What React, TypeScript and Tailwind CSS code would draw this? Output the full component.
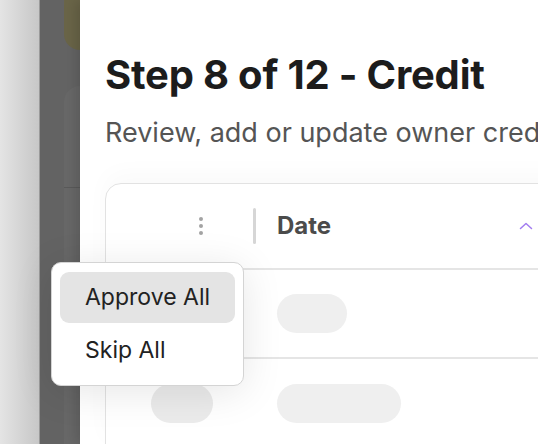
export default function App() {
  return (
    <div
      className="relative flex h-[444px] w-[538px] overflow-hidden bg-white"
      style={{ fontFamily: "Inter, 'Noto Sans', sans-serif" }}
    >
      {/* page behind the drawer */}
      <div className="h-full w-[39px] bg-gradient-to-r from-[#e4e4e4] to-[#c7c7c7]" />
      <div className="h-full w-px bg-[#9a9a9a]" />
      <div className="h-full w-[24px] bg-[#636363]" />
      <div className="flex h-full w-[16px] flex-col bg-[#646464]">
        <div className="h-[50px] rounded-bl-2xl bg-[#6a6548]" />
        <div className="mt-[36px] flex-1 rounded-tl-[28px] bg-[#686868]">
          <div className="mt-[101px] h-px bg-[#5a5a5a]" />
        </div>
      </div>

      {/* drawer */}
      <div className="flex h-full min-w-0 flex-1 flex-col overflow-hidden bg-white pl-[25px] shadow-[-4px_0_12px_rgba(0,0,0,0.15)]">
        <h1 className="mt-[51px] whitespace-nowrap text-[40px] font-bold leading-[48px] tracking-[-0.2px] text-[#1c1c1c]">
          Step 8 of 12 - Credit
        </h1>
        <p className="mt-[18px] whitespace-nowrap text-[27px] leading-[32px] text-[#555555]">
          Review, add or update owner credit entries
        </p>

        <div className="mt-[34px] w-[600px] shrink-0 rounded-tl-2xl border border-[#e2e2e2] shadow-[0_-10px_24px_rgba(0,0,0,0.025)]">
          {/* header */}
          <div className="flex h-[86px] items-center border-b-2 border-[#e5e5e5]">
            <div className="flex w-[147px] items-center justify-end pr-[50px]">
              <div className="flex flex-col gap-[3px]">
                <span className="h-[4px] w-[4px] rounded-full bg-[#a3a3a3]" />
                <span className="h-[4px] w-[4px] rounded-full bg-[#a3a3a3]" />
                <span className="h-[4px] w-[4px] rounded-full bg-[#a3a3a3]" />
              </div>
            </div>
            <div className="h-[36px] w-[3px] rounded-full bg-[#d6d6d6]" />
            <span className="ml-[21px] text-[24px] font-bold text-[#4b4b4b]">
              Date
            </span>
            <svg
              className="ml-[188px]"
              width="14"
              height="10"
              viewBox="0 0 14 10"
              fill="none"
            >
              <path
                d="M1.5 7.5L7 2.5L12.5 7.5"
                stroke="#a27cf0"
                strokeWidth="1.5"
                strokeLinecap="round"
                strokeLinejoin="round"
              />
            </svg>
          </div>

          {/* row 1 */}
          <div className="flex h-[89px] items-center border-b-2 border-[#e5e5e5]">
            <div className="w-[150px]" />
            <div className="ml-[21px] h-[39px] w-[70px] rounded-full bg-[#efefef]" />
          </div>

          {/* row 2 */}
          <div className="flex h-[89px] items-center">
            <div className="flex w-[150px] justify-end pr-[43px]">
              <div className="h-[39px] w-[62px] rounded-full bg-[#ebebeb]" />
            </div>
            <div className="ml-[21px] h-[39px] w-[124px] rounded-full bg-[#efefef]" />
          </div>
        </div>
      </div>

      {/* popup menu */}
      <div className="absolute left-[51px] top-[262px] flex w-[193px] flex-col rounded-[10px] border border-[#d4d4d4] bg-white px-[8px] pb-[8px] pt-[9px] shadow-[0_6px_40px_rgba(0,0,0,0.1)]">
        <div className="flex h-[51px] items-center rounded-[9px] bg-[#e4e4e4] pl-[25px] text-[23px] text-[#222222]">
          Approve All
        </div>
        <div className="flex h-[54px] items-center pl-[25px] text-[23px] text-[#222222]">
          Skip All
        </div>
      </div>
    </div>
  );
}
